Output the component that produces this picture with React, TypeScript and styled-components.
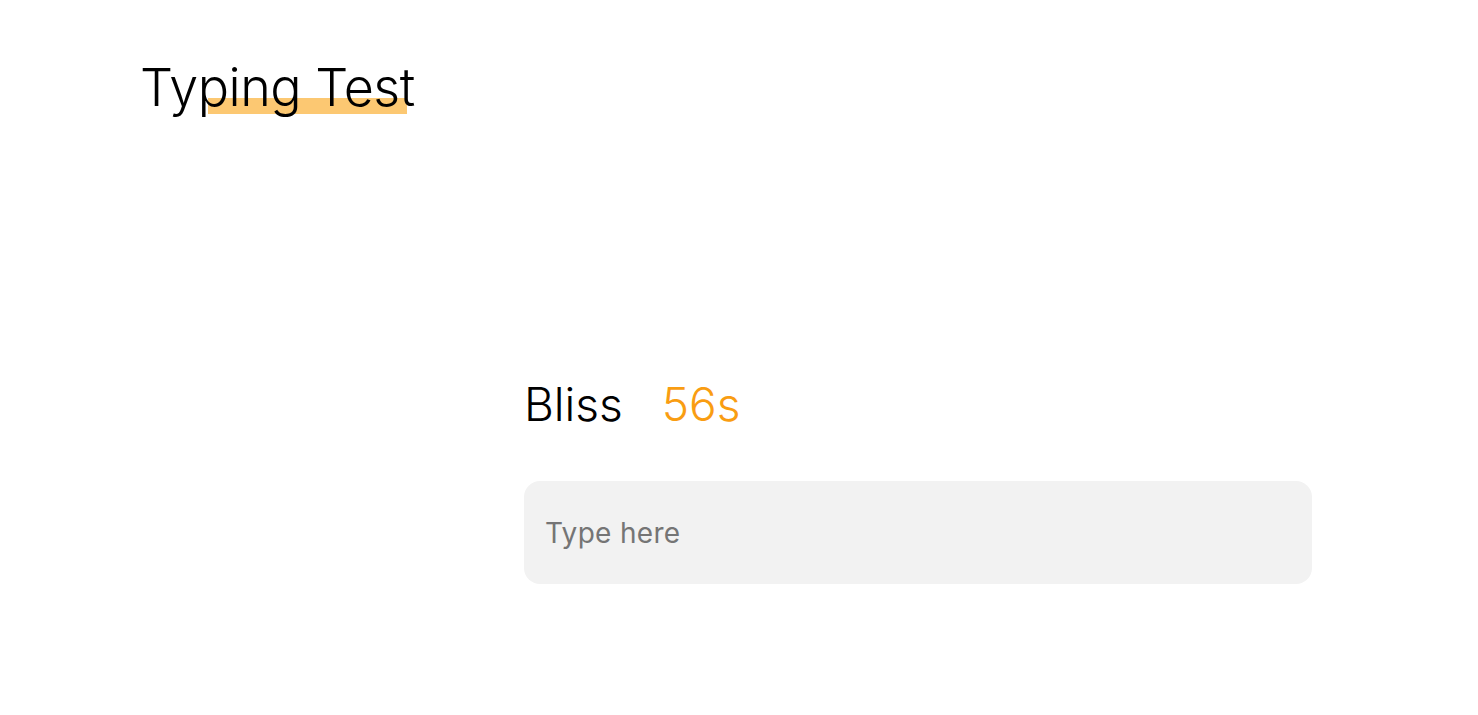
import React from 'react';
import styled, { createGlobalStyle } from 'styled-components';

const GlobalStyle = createGlobalStyle`
  html, body {
    margin: 0;
    padding: 0;
    background: #ffffff;
  }
  body {
    font-family: Inter, "Noto Sans", sans-serif;
    color: #000;
  }
`;

const Page = styled.div`
  width: 1478px;
  height: 715px;
  box-sizing: border-box;
  padding: 56px 166px 0 140px;
`;

const Header = styled.header`
  display: flex;
  align-items: flex-start;
`;

const Title = styled.h1`
  position: relative;
  margin: 0;
  font-size: 52px;
  font-weight: 300;
  line-height: 64px;
  letter-spacing: -0.5px;
  z-index: 0;

  &::after {
    content: '';
    position: absolute;
    left: 68px;
    right: 8px;
    top: 42px;
    height: 16px;
    background: #fcc872;
    z-index: -1;
  }
`;

const Main = styled.main`
  display: grid;
  grid-template-columns: 384px 1fr;
  margin-top: 254px;
`;

const Game = styled.section`
  grid-column: 2;
  display: flex;
  flex-direction: column;
  gap: 47px;
`;

const Status = styled.div`
  display: flex;
  align-items: baseline;
  gap: 39px;
  font-size: 46px;
  font-weight: 300;
  line-height: 60px;
`;

const Word = styled.span`
  color: #000;
`;

const Timer = styled.span`
  color: #f99d12;
`;

const TypeInput = styled.input`
  width: 100%;
  height: 103px;
  box-sizing: border-box;
  padding: 0 21px;
  border: none;
  outline: none;
  border-radius: 16px;
  background: #f2f2f2;
  font-family: Inter, "Noto Sans", sans-serif;
  font-size: 28px;
  letter-spacing: 0.3px;
  color: #333;

  &::placeholder {
    color: #757575;
  }
`;

export default function App() {
  return (
    <>
      <GlobalStyle />
      <Page>
        <Header>
          <Title>Typing Test</Title>
        </Header>
        <Main>
          <Game>
            <Status>
              <Word>Bliss</Word>
              <Timer>56s</Timer>
            </Status>
            <TypeInput placeholder="Type here" />
          </Game>
        </Main>
      </Page>
    </>
  );
}
